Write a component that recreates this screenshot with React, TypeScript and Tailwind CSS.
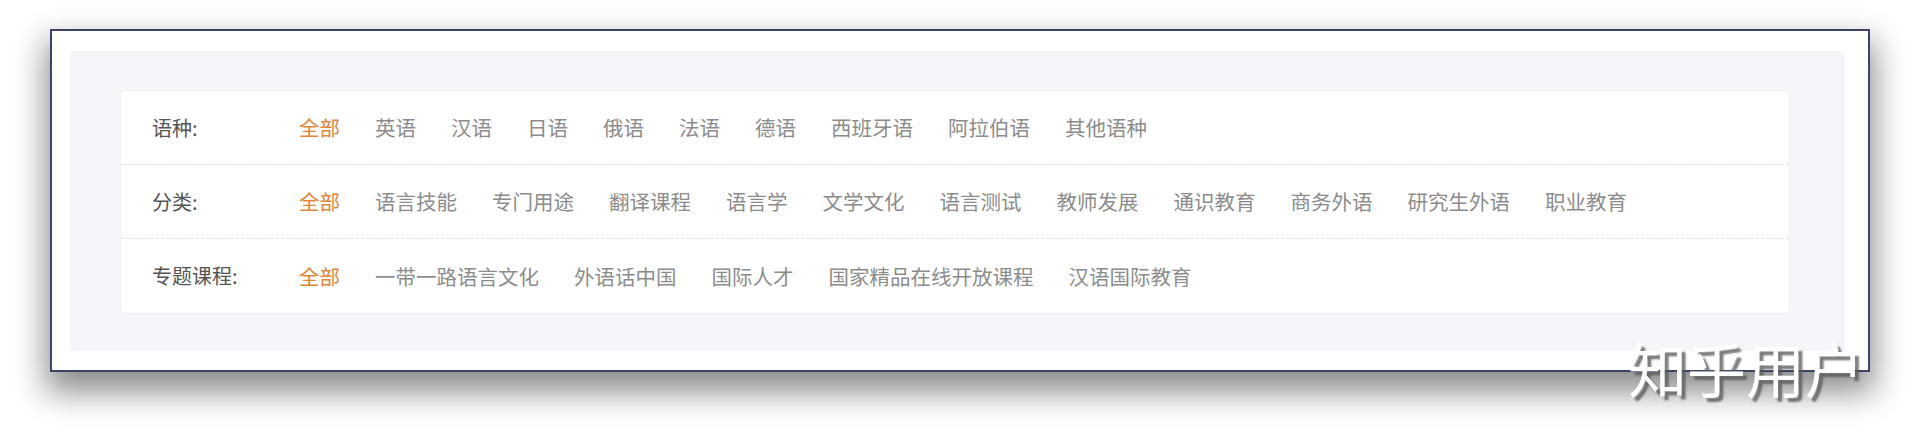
const rows = [
  {
    label: '语种:',
    items: ['全部', '英语', '汉语', '日语', '俄语', '法语', '德语', '西班牙语', '阿拉伯语', '其他语种'],
  },
  {
    label: '分类:',
    items: [
      '全部',
      '语言技能',
      '专门用途',
      '翻译课程',
      '语言学',
      '文学文化',
      '语言测试',
      '教师发展',
      '通识教育',
      '商务外语',
      '研究生外语',
      '职业教育',
    ],
  },
  {
    label: '专题课程:',
    items: ['全部', '一带一路语言文化', '外语话中国', '国际人才', '国家精品在线开放课程', '汉语国际教育'],
  },
];

const FilterRow = ({ label, items, last }: { label: string; items: string[]; last: boolean }) => (
  <div
    className={`flex items-center h-[74px] pl-[31px] ${last ? '' : 'border-b border-dashed border-[#e3e3e3]'}`}
  >
    <div className="w-[147px] shrink-0 text-[#555] text-[20px]">{label}</div>
    <div className="flex items-center gap-[35px] text-[20.5px]">
      {items.map((item, i) => (
        <span key={item} className={i === 0 ? 'text-[#e2843a]' : 'text-[#8c8c8c]'}>
          {item}
        </span>
      ))}
    </div>
  </div>
);

export default function App() {
  return (
    <div
      className="relative w-[1920px] h-[443px] bg-white overflow-hidden pt-[29px] pl-[50px]"
      style={{ fontFamily: '"Noto Sans CJK SC", "Noto Sans", sans-serif' }}
    >
      <div className="w-[1820px] h-[343px] bg-white border-2 border-[#3b4468] shadow-[0_16px_30px_4px_rgba(0,0,0,0.45)] pt-[20px] pl-[18px] pr-[23px] pb-[19px]">
        <div className="h-full bg-[#f4f6f9] pt-[39px] pl-[50px] pr-[55px]">
          <div className="bg-white border border-[#eef0f3] rounded-[4px] leading-none">
            {rows.map((row, i) => (
              <FilterRow key={row.label} label={row.label} items={row.items} last={i === rows.length - 1} />
            ))}
          </div>
        </div>
      </div>
      <div className="absolute left-[1628px] top-[338px] text-[59px] leading-none text-white [text-shadow:4px_4px_2px_rgba(90,90,90,0.8)]">
        知乎用户
      </div>
    </div>
  );
}
